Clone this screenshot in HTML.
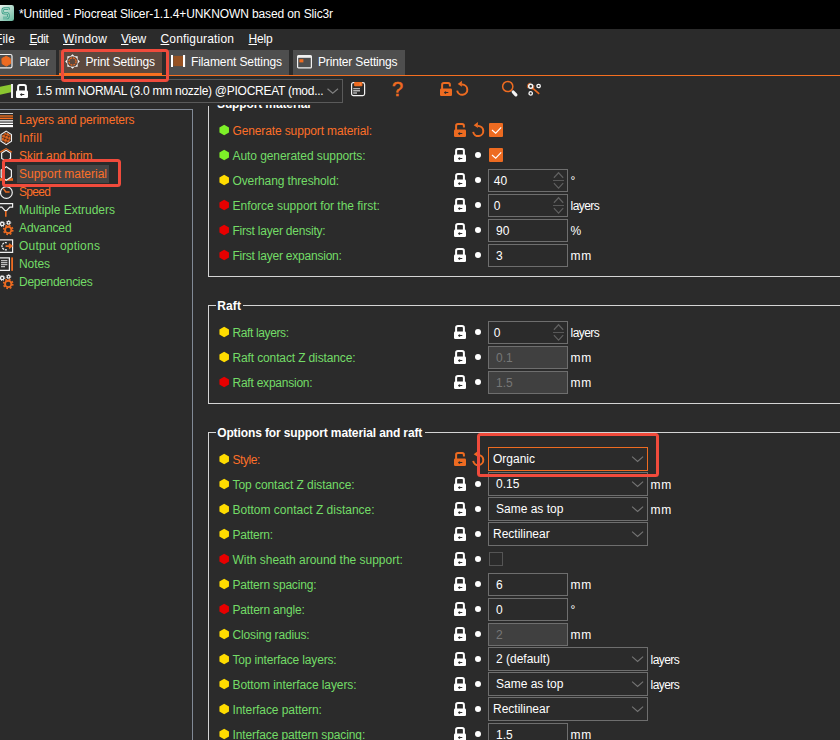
<!DOCTYPE html>
<html><head><meta charset="utf-8"><title>Piocreat Slicer</title>
<style>html,body{margin:0;padding:0}body{width:840px;height:740px;overflow:hidden;position:relative;background:#2b2b2b;font-family:"Liberation Sans", sans-serif;font-size:12px;color:#fff}u{text-decoration:underline;text-underline-offset:1px}</style></head>
<body>
<div style="position:absolute;left:194px;top:105px;width:646px;height:20px;overflow:hidden">
<span id="t0" style="position:absolute;left:23px;top:-11px;height:20px;line-height:20px;white-space:nowrap;color:#ffffff;font-size:12px;font-weight:bold;letter-spacing:-0.120px;">Support material</span>
</div>
<div style="position:absolute;left:0px;top:0px;width:840px;height:29px;background:#000"></div>
<svg style="position:absolute;left:-2px;top:5px" width="16" height="16" viewBox="0 0 16 16"><defs><linearGradient id="ig" x1="0" y1="0" x2="0.9" y2="1"><stop offset="0" stop-color="#f2f5f3"/><stop offset="0.45" stop-color="#b9dccf"/><stop offset="1" stop-color="#6dbba3"/></linearGradient></defs><rect x="0" y="0" width="16" height="16" rx="2.2" fill="url(#ig)"/><path d="M10.6 4.8 V3.6 H6.2 A1.4 1.4 0 0 0 4.8 5 V7 A1.4 1.4 0 0 0 6.2 8.2 H9 A1.6 1.6 0 0 1 10.4 9.8 V11.4 A1.6 1.6 0 0 1 8.8 13 H5" fill="none" stroke="#3a9e86" stroke-width="2.6" stroke-linejoin="round"/><path d="M10.6 4.8 V3.6 H6.2 A1.4 1.4 0 0 0 4.8 5 V7 A1.4 1.4 0 0 0 6.2 8.2 H9 A1.6 1.6 0 0 1 10.4 9.8 V11.4 A1.6 1.6 0 0 1 8.8 13 H5" fill="none" stroke="#a9d6c7" stroke-width="1" stroke-linejoin="round"/></svg>
<span id="t1" style="position:absolute;left:19px;top:4px;height:20px;line-height:20px;white-space:nowrap;color:#ffffff;font-size:12px;letter-spacing:-0.114px;">*Untitled - Piocreat Slicer-1.1.4+UNKNOWN based on Slic3r</span>
<span id="t2" style="position:absolute;left:-5px;top:29px;height:20px;line-height:20px;white-space:nowrap;color:#ffffff;font-size:12px;letter-spacing:0.183px;"><u>F</u>ile</span>
<span id="t3" style="position:absolute;left:29.4px;top:29px;height:20px;line-height:20px;white-space:nowrap;color:#ffffff;font-size:12px;letter-spacing:-0.429px;"><u>E</u>dit</span>
<span id="t4" style="position:absolute;left:63px;top:29px;height:20px;line-height:20px;white-space:nowrap;color:#ffffff;font-size:12px;letter-spacing:0.239px;"><u>W</u>indow</span>
<span id="t5" style="position:absolute;left:121px;top:29px;height:20px;line-height:20px;white-space:nowrap;color:#ffffff;font-size:12px;letter-spacing:-0.232px;"><u>V</u>iew</span>
<span id="t6" style="position:absolute;left:160.5px;top:29px;height:20px;line-height:20px;white-space:nowrap;color:#ffffff;font-size:12px;letter-spacing:0.169px;"><u>C</u>onfiguration</span>
<span id="t7" style="position:absolute;left:248.5px;top:29px;height:20px;line-height:20px;white-space:nowrap;color:#ffffff;font-size:12px;letter-spacing:-0.196px;"><u>H</u>elp</span>
<div style="position:absolute;left:0px;top:50px;width:56px;height:25px;background:#4e4e4e"></div>
<div style="position:absolute;left:59px;top:50px;width:103px;height:25px;background:#5c483e"></div>
<div style="position:absolute;left:59px;top:73px;width:103px;height:3px;background:#f97020"></div>
<div style="position:absolute;left:168px;top:50px;width:121px;height:25px;background:#4e4e4e"></div>
<div style="position:absolute;left:293px;top:50px;width:111.5px;height:25px;background:#4e4e4e"></div>
<div style="position:absolute;left:0px;top:74.6px;width:840px;height:1.5px;background:#f56f20"></div>
<span id="t8" style="position:absolute;left:19.5px;top:52px;height:20px;line-height:20px;white-space:nowrap;color:#ffffff;font-size:12px;letter-spacing:-0.338px;">Plater</span>
<span id="t9" style="position:absolute;left:85.5px;top:52px;height:20px;line-height:20px;white-space:nowrap;color:#ffffff;font-size:12px;letter-spacing:-0.139px;">Print Settings</span>
<span id="t10" style="position:absolute;left:191px;top:52px;height:20px;line-height:20px;white-space:nowrap;color:#ffffff;font-size:12px;letter-spacing:-0.104px;">Filament Settings</span>
<span id="t11" style="position:absolute;left:318px;top:52px;height:20px;line-height:20px;white-space:nowrap;color:#ffffff;font-size:12px;letter-spacing:-0.164px;">Printer Settings</span>
<svg style="position:absolute;left:-3px;top:54px;overflow:visible" width="16" height="15" viewBox="0 0 16 15"><rect x="0.5" y="0.5" width="14.5" height="13.4" rx="1.6" fill="none" stroke="#f0f0f0" stroke-width="1.2"/><polygon points="9.3,2.3 13.2,4.4 13.6,9.6 9.3,12.1 5.2,9.8 4.9,4.5" fill="#ed6b21" stroke="#ed6b21" stroke-width="1" stroke-linejoin="round"/></svg>
<svg style="position:absolute;left:64.5px;top:53.5px;overflow:visible" width="15" height="15" viewBox="0 0 15 15"><polygon points="7.50,0.20 9.64,2.33 12.66,2.34 12.67,5.36 14.80,7.50 12.67,9.64 12.66,12.66 9.64,12.67 7.50,14.80 5.36,12.67 2.34,12.66 2.33,9.64 0.20,7.50 2.33,5.36 2.34,2.34 5.36,2.33" fill="#f4f4f4"/><circle cx="7.5" cy="7.5" r="5.3" fill="#5c483e"/><circle cx="7.5" cy="7.5" r="3.6" fill="none" stroke="#ed6b21" stroke-width="1.2" stroke-dasharray="1.9 0.93"/></svg>
<svg style="position:absolute;left:171px;top:55px;overflow:visible" width="14" height="12" viewBox="0 0 14 12"><rect x="0" y="0" width="2" height="12" fill="#ffffff"/><rect x="12" y="0" width="2.1" height="12" fill="#ffffff"/><rect x="2.3" y="0.9" width="9.7" height="10.2" fill="#965223"/></svg>
<svg style="position:absolute;left:297px;top:55px;overflow:visible" width="15" height="14" viewBox="0 0 15 14"><rect x="0.6" y="0.6" width="13.8" height="12.3" rx="1" fill="none" stroke="#f0f0f0" stroke-width="1.2"/><rect x="0.6" y="0.6" width="13.8" height="2.2" fill="#f0f0f0"/><rect x="2.4" y="4.2" width="4" height="3.2" fill="#ed6b21"/></svg>
<div style="position:absolute;left:-1px;top:79px;width:344px;height:24px;box-sizing:border-box;border:1px solid #5a5a5a;background:#2b2b2b"></div>
<svg style="position:absolute;left:0px;top:84px;overflow:visible" width="12" height="13" viewBox="0 0 12 13"><polygon points="-1,2.9 11,0.6 11,8.2 -1,11" fill="#8bc630"/></svg>
<div style="position:absolute;left:11px;top:84px;width:1.6px;height:14px;background:#e8e8e8"></div>
<svg style="position:absolute;left:16px;top:83.5px;overflow:visible" width="12" height="14" viewBox="0 0 12 14"><path d="M2.1 7 V2.9 A1.8 1.8 0 0 1 3.9 1.1 H8.1 A1.8 1.8 0 0 1 9.9 2.9 V7" fill="none" stroke="#fff" stroke-width="2"/><rect x="0" y="6.5" width="12" height="7.5" rx="1.2" fill="#fff"/><path d="M3.9 10.6 L5.3 9.2 L6.6 10.1 H8.3 V11.1 H6.6 L5.3 12 Z" fill="#2b2b2b"/></svg>
<span id="t12" style="position:absolute;left:36px;top:81px;height:20px;line-height:20px;white-space:nowrap;color:#ffffff;font-size:12px;letter-spacing:-0.269px;">1.5 mm NORMAL (3.0 mm nozzle) @PIOCREAT (mod...</span>
<svg style="position:absolute;left:0;top:0;overflow:visible" width="1" height="1"><path d="M327.5 88.7 L332.75 93.3 L338 88.7" fill="none" stroke="#808080" stroke-width="1.2"/></svg>
<svg style="position:absolute;left:351px;top:82px;overflow:visible" width="14" height="14" viewBox="0 0 14 14"><rect x="0.6" y="0.6" width="13" height="13" rx="1.8" fill="none" stroke="#f2f2f2" stroke-width="1.2"/><rect x="3.1" y="0" width="8.3" height="4.3" rx="0.8" fill="#ed6b21"/><rect x="8.6" y="0.9" width="1.5" height="2.2" fill="#f98a45"/><path d="M2.2 6.6 H9 M2.2 8.8 H9 M2.2 11 H6" stroke="#b4b4b4" stroke-width="1.4"/></svg>
<span id="t13" style="position:absolute;left:392px;top:78.7px;height:20px;line-height:20px;white-space:nowrap;color:#ed6b21;font-size:20px;letter-spacing:-1.125px;-webkit-text-stroke:0.5px #ed6b21;">?</span>
<svg style="position:absolute;left:440px;top:82px;overflow:visible" width="12" height="14" viewBox="0 0 12 14"><path d="M2.1 7 V2.9 A1.8 1.8 0 0 1 3.9 1.1 H8.1 A1.8 1.8 0 0 1 9.9 2.9 V4.6" fill="none" stroke="#ed6b21" stroke-width="2"/><rect x="0" y="6.5" width="12" height="7.5" rx="1.2" fill="#ed6b21"/><path d="M3.9 10.6 L5.3 9.2 L6.6 10.1 H8.3 V11.1 H6.6 L5.3 12 Z" fill="#2b2b2b"/></svg>
<svg style="position:absolute;left:0;top:0;overflow:visible" width="1" height="1"><path d="M462.02 84.60 A5.10 5.10 0 1 1 457.18 90.59" fill="none" stroke="#ed6b21" stroke-width="2"/><path d="M457.70 84.00 L461.90 80.70 L461.90 86.80 Z" fill="#ed6b21"/></svg>
<svg style="position:absolute;left:501px;top:80px;overflow:visible" width="18" height="18" viewBox="0 0 18 18"><circle cx="6.75" cy="6.5" r="5.1" fill="none" stroke="#ed6b21" stroke-width="1.5"/><path d="M12.2 12 L14.9 14.8" stroke="#f4f4f4" stroke-width="3.2" stroke-linecap="round"/></svg>
<svg style="position:absolute;left:526px;top:81px;overflow:visible" width="16" height="16" viewBox="0 0 16 16"><path d="M5.2 5.8 L13.2 12.9" stroke="#ed6b21" stroke-width="1.6"/><circle cx="4.7" cy="5.3" r="3.3" fill="none" stroke="#ed6b21" stroke-width="0.9" stroke-dasharray="7 4" stroke-dashoffset="-8"/><circle cx="4.7" cy="5.3" r="2" fill="#2b2b2b" stroke="#f8f8f8" stroke-width="1.5"/><circle cx="12.6" cy="5" r="1.7" fill="none" stroke="#f8f8f8" stroke-width="1.3"/><circle cx="4.7" cy="12.4" r="1.7" fill="none" stroke="#f8f8f8" stroke-width="1.3"/></svg>
<div style="position:absolute;left:-1px;top:109px;width:194px;height:640px;box-sizing:border-box;border:1px solid #828a96;background:#2b2b2b"></div>
<div style="position:absolute;left:17px;top:165px;width:92px;height:18px;background:#444444"></div>
<span id="t14" style="position:absolute;left:19px;top:110px;height:20px;line-height:20px;white-space:nowrap;color:#fd6f28;font-size:12px;letter-spacing:-0.190px;">Layers and perimeters</span>
<span id="t15" style="position:absolute;left:19px;top:128px;height:20px;line-height:20px;white-space:nowrap;color:#fd6f28;font-size:12px;letter-spacing:0.301px;">Infill</span>
<span id="t16" style="position:absolute;left:19px;top:146px;height:20px;line-height:20px;white-space:nowrap;color:#fd6f28;font-size:12px;letter-spacing:-0.039px;">Skirt and brim</span>
<span id="t17" style="position:absolute;left:19px;top:164px;height:20px;line-height:20px;white-space:nowrap;color:#fd6f28;font-size:12px;letter-spacing:-0.003px;">Support material</span>
<span id="t18" style="position:absolute;left:19px;top:182px;height:20px;line-height:20px;white-space:nowrap;color:#fd6f28;font-size:12px;letter-spacing:-0.712px;">Speed</span>
<span id="t19" style="position:absolute;left:19px;top:200px;height:20px;line-height:20px;white-space:nowrap;color:#73dc67;font-size:12px;letter-spacing:-0.003px;">Multiple Extruders</span>
<span id="t20" style="position:absolute;left:19px;top:218px;height:20px;line-height:20px;white-space:nowrap;color:#73dc67;font-size:12px;letter-spacing:-0.117px;">Advanced</span>
<span id="t21" style="position:absolute;left:19px;top:236px;height:20px;line-height:20px;white-space:nowrap;color:#73dc67;font-size:12px;letter-spacing:0.218px;">Output options</span>
<span id="t22" style="position:absolute;left:19px;top:254px;height:20px;line-height:20px;white-space:nowrap;color:#73dc67;font-size:12px;letter-spacing:-0.080px;">Notes</span>
<span id="t23" style="position:absolute;left:19px;top:272px;height:20px;line-height:20px;white-space:nowrap;color:#73dc67;font-size:12px;letter-spacing:-0.281px;">Dependencies</span>
<svg style="position:absolute;left:0;top:0;overflow:visible" width="16" height="740" viewBox="0 0 16 740"><rect x="0" y="113" width="13" height="1" fill="#c8c8c8"/><rect x="0" y="115" width="13" height="2" fill="#b35a1f"/><rect x="0" y="117.6" width="13" height="1.5" fill="#f97020"/><rect x="0" y="120" width="13" height="1.5" fill="#d0d0d0"/><rect x="0" y="121.5" width="13" height="1.2" fill="#9a9a9a"/><rect x="0" y="123" width="13" height="1.1" fill="#ffffff"/><rect x="0" y="125" width="13" height="2.2" fill="#ffffff"/><defs><pattern id="xh" width="3.2" height="3.2" patternUnits="userSpaceOnUse" patternTransform="rotate(20)"><rect width="3.2" height="3.2" fill="#e0651f"/><path d="M0 0 H3.2 M0 0 V3.2" stroke="#3a2418" stroke-width="1"/></pattern></defs><polygon points="6.20,132.30 10.56,135.10 10.56,140.70 6.20,143.50 1.84,140.70 1.84,135.10" fill="url(#xh)"/><polygon points="6.20,131.10 11.50,134.50 11.50,141.30 6.20,144.70 0.90,141.30 0.90,134.50" fill="none" stroke="#f0f0f0" stroke-width="1.1"/><polygon points="6.10,150.30 10.54,153.00 10.54,158.40 6.10,161.10 1.66,158.40 1.66,153.00" fill="none" stroke="#f0f0f0" stroke-width="1.2"/><path d="M0.2 152.2 L6.1 148.6 L12 152.2" fill="none" stroke="#ed6b21" stroke-width="1.2"/><rect x="-1" y="178.2" width="14" height="2.6" fill="#ed6b21"/><polygon points="6.30,166.80 11.41,170.15 11.41,176.85 6.30,180.20 1.19,176.85 1.19,170.15" fill="#2b2b2b" stroke="#f0f0f0" stroke-width="1.2"/><circle cx="6.4" cy="192.5" r="5.9" fill="none" stroke="#f0f0f0" stroke-width="1.2"/><path d="M3.4 188.6 L5.8 192 H9.6" fill="none" stroke="#ed6b21" stroke-width="1.4"/><path d="M-1 203.6 H12.6 V207.2 H9.8 L6.6 210.6 H5 L1.8 207.2 H-1" fill="none" stroke="#f0f0f0" stroke-width="1.2"/><path d="M5.8 211 V216.8" stroke="#ed6b21" stroke-width="1.6"/><circle cx="2.2" cy="224" r="1.7" fill="none" stroke="#f0f0f0" stroke-width="1.3"/><circle cx="2.2" cy="224" r="2.6" fill="none" stroke="#f0f0f0" stroke-width="0.9" stroke-dasharray="1 1.05"/><circle cx="8.6" cy="222.7" r="1.4" fill="none" stroke="#f0f0f0" stroke-width="1.2"/><circle cx="8.6" cy="222.7" r="2.2" fill="none" stroke="#f0f0f0" stroke-width="0.8" stroke-dasharray="0.9 0.83"/><circle cx="8.2" cy="229.9" r="3.2" fill="none" stroke="#ed6b21" stroke-width="1.9"/><circle cx="8.2" cy="229.9" r="4.6" fill="none" stroke="#ed6b21" stroke-width="1.5" stroke-dasharray="1.8 1.81"/><circle cx="2.2" cy="278" r="1.7" fill="none" stroke="#f0f0f0" stroke-width="1.3"/><circle cx="2.2" cy="278" r="2.6" fill="none" stroke="#f0f0f0" stroke-width="0.9" stroke-dasharray="1 1.05"/><circle cx="8.6" cy="276.7" r="1.4" fill="none" stroke="#f0f0f0" stroke-width="1.2"/><circle cx="8.6" cy="276.7" r="2.2" fill="none" stroke="#f0f0f0" stroke-width="0.8" stroke-dasharray="0.9 0.83"/><circle cx="8.2" cy="283.9" r="3.2" fill="none" stroke="#ed6b21" stroke-width="1.9"/><circle cx="8.2" cy="283.9" r="4.6" fill="none" stroke="#ed6b21" stroke-width="1.5" stroke-dasharray="1.8 1.81"/><path d="M-1 239.9 H12.6 V252.4 H-1" fill="none" stroke="#f0f0f0" stroke-width="1.2"/><path d="M6.8 242.8 A3.6 3.6 0 1 0 6.8 249.6" fill="none" stroke="#f0f0f0" stroke-width="1.3" stroke-dasharray="2 0.8"/><path d="M5.6 246.1 H11 M9 243.8 L11.8 246.1 L9 248.4" fill="none" stroke="#ed6b21" stroke-width="1.6"/><path d="M-1 257.9 H9.4 V270.4 H-1" fill="none" stroke="#f0f0f0" stroke-width="1.2"/><path d="M1 260.6 H7.4 M1 262.6 H7.4 M1 264.6 H7.4 M1 266.6 H5" stroke="#bdbdbd" stroke-width="1.4"/><rect x="11.2" y="257.4" width="1.8" height="13.4" fill="#ed6b21"/></svg>
<div style="position:absolute;left:208px;top:105.7px;width:700px;height:171.3px;box-sizing:border-box;border:1px solid #d4d4d4;border-right:none;border-top:none"></div>
<div style="position:absolute;left:208px;top:305px;width:700px;height:99px;box-sizing:border-box;border:1px solid #d4d4d4;border-right:none"></div>
<div style="position:absolute;left:215.5px;top:300px;width:27.5px;height:12px;background:#2b2b2b"></div>
<span id="t24" style="position:absolute;left:217.3px;top:296px;height:20px;line-height:20px;white-space:nowrap;color:#ffffff;font-size:12px;font-weight:bold;letter-spacing:0.102px;">Raft</span>
<div style="position:absolute;left:208px;top:432px;width:700px;height:400px;box-sizing:border-box;border:1px solid #d4d4d4;border-right:none"></div>
<div style="position:absolute;left:215.5px;top:426px;width:209px;height:12px;background:#2b2b2b"></div>
<span id="t25" style="position:absolute;left:217.2px;top:423px;height:20px;line-height:20px;white-space:nowrap;color:#ffffff;font-size:12px;font-weight:bold;letter-spacing:-0.117px;">Options for support material and raft</span>
<svg style="position:absolute;left:0;top:0;overflow:visible" width="1" height="1"><polygon points="224.20,124.85 228.97,127.42 228.97,132.57 224.20,135.15 219.43,132.57 219.43,127.42" fill="#7df028"/></svg>
<span id="t26" style="position:absolute;left:232.5px;top:121px;height:20px;line-height:20px;white-space:nowrap;color:#fd6f28;font-size:12px;letter-spacing:-0.127px;">Generate support material:</span>
<svg style="position:absolute;left:454px;top:123px;overflow:visible" width="12" height="14" viewBox="0 0 12 14"><path d="M2.1 7 V2.9 A1.8 1.8 0 0 1 3.9 1.1 H8.1 A1.8 1.8 0 0 1 9.9 2.9 V4.6" fill="none" stroke="#ed6b21" stroke-width="2"/><rect x="0" y="6.5" width="12" height="7.5" rx="1.2" fill="#ed6b21"/><path d="M3.9 10.6 L5.3 9.2 L6.6 10.1 H8.3 V11.1 H6.6 L5.3 12 Z" fill="#2b2b2b"/></svg>
<svg style="position:absolute;left:0;top:0;overflow:visible" width="1" height="1"><path d="M478.02 125.90 A5.10 5.10 0 1 1 473.18 131.89" fill="none" stroke="#ed6b21" stroke-width="2"/><path d="M473.70 125.30 L477.90 122.00 L477.90 128.10 Z" fill="#ed6b21"/></svg>
<div style="position:absolute;left:489px;top:123px;width:14px;height:14px;background:#ed6b21;border-radius:1px"></div>
<svg style="position:absolute;left:489px;top:123px;overflow:visible" width="14" height="14" viewBox="0 0 14 14"><path d="M3 7 L6.7 10.2 L12.2 4.4" fill="none" stroke="#fff" stroke-width="1.15"/></svg>
<svg style="position:absolute;left:0;top:0;overflow:visible" width="1" height="1"><polygon points="224.20,149.85 228.97,152.43 228.97,157.57 224.20,160.15 219.43,157.57 219.43,152.43" fill="#7df028"/></svg>
<span id="t27" style="position:absolute;left:232.5px;top:146px;height:20px;line-height:20px;white-space:nowrap;color:#73dc67;font-size:12px;letter-spacing:-0.075px;">Auto generated supports:</span>
<svg style="position:absolute;left:454px;top:148px;overflow:visible" width="12" height="14" viewBox="0 0 12 14"><path d="M2.1 7 V2.9 A1.8 1.8 0 0 1 3.9 1.1 H8.1 A1.8 1.8 0 0 1 9.9 2.9 V7" fill="none" stroke="#fff" stroke-width="2"/><rect x="0" y="6.5" width="12" height="7.5" rx="1.2" fill="#fff"/><path d="M3.9 10.6 L5.3 9.2 L6.6 10.1 H8.3 V11.1 H6.6 L5.3 12 Z" fill="#2b2b2b"/></svg>
<div style="position:absolute;left:475px;top:152px;width:6px;height:6px;border-radius:50%;background:#fff"></div>
<div style="position:absolute;left:489px;top:148px;width:14px;height:14px;background:#ed6b21;border-radius:1px"></div>
<svg style="position:absolute;left:489px;top:148px;overflow:visible" width="14" height="14" viewBox="0 0 14 14"><path d="M3 7 L6.7 10.2 L12.2 4.4" fill="none" stroke="#fff" stroke-width="1.15"/></svg>
<svg style="position:absolute;left:0;top:0;overflow:visible" width="1" height="1"><polygon points="224.20,174.85 228.97,177.43 228.97,182.57 224.20,185.15 219.43,182.57 219.43,177.43" fill="#ffdc00"/></svg>
<span id="t28" style="position:absolute;left:232.5px;top:171px;height:20px;line-height:20px;white-space:nowrap;color:#73dc67;font-size:12px;letter-spacing:-0.121px;">Overhang threshold:</span>
<svg style="position:absolute;left:454px;top:173px;overflow:visible" width="12" height="14" viewBox="0 0 12 14"><path d="M2.1 7 V2.9 A1.8 1.8 0 0 1 3.9 1.1 H8.1 A1.8 1.8 0 0 1 9.9 2.9 V7" fill="none" stroke="#fff" stroke-width="2"/><rect x="0" y="6.5" width="12" height="7.5" rx="1.2" fill="#fff"/><path d="M3.9 10.6 L5.3 9.2 L6.6 10.1 H8.3 V11.1 H6.6 L5.3 12 Z" fill="#2b2b2b"/></svg>
<div style="position:absolute;left:475px;top:177px;width:6px;height:6px;border-radius:50%;background:#fff"></div>
<div style="position:absolute;left:488px;top:169px;width:80px;height:23px;box-sizing:border-box;border:1px solid #6e6e6e;background:#2b2b2b"></div>
<span id="t29" style="position:absolute;left:493.8px;top:171px;height:20px;line-height:20px;white-space:nowrap;color:#ffffff;font-size:12px;">40</span>
<svg style="position:absolute;left:0;top:0;overflow:visible" width="1" height="1"><path d="M553.9 177.75 L558.55 172.75 L563.2 177.75" fill="none" stroke="#606060" stroke-width="1.2"/></svg>
<svg style="position:absolute;left:0;top:0;overflow:visible" width="1" height="1"><path d="M553.9 183.2 L558.55 188.2 L563.2 183.2" fill="none" stroke="#606060" stroke-width="1.2"/></svg>
<div style="position:absolute;left:553px;top:180px;width:11px;height:1px;background:#585858"></div>
<span id="t30" style="position:absolute;left:570.6px;top:171px;height:20px;line-height:20px;white-space:nowrap;color:#ffffff;font-size:12px;letter-spacing:-0.812px;">°</span>
<svg style="position:absolute;left:0;top:0;overflow:visible" width="1" height="1"><polygon points="224.20,199.85 228.97,202.43 228.97,207.57 224.20,210.15 219.43,207.57 219.43,202.43" fill="#e70000"/></svg>
<span id="t31" style="position:absolute;left:232.5px;top:196px;height:20px;line-height:20px;white-space:nowrap;color:#73dc67;font-size:12px;letter-spacing:-0.026px;">Enforce support for the first:</span>
<svg style="position:absolute;left:454px;top:198px;overflow:visible" width="12" height="14" viewBox="0 0 12 14"><path d="M2.1 7 V2.9 A1.8 1.8 0 0 1 3.9 1.1 H8.1 A1.8 1.8 0 0 1 9.9 2.9 V7" fill="none" stroke="#fff" stroke-width="2"/><rect x="0" y="6.5" width="12" height="7.5" rx="1.2" fill="#fff"/><path d="M3.9 10.6 L5.3 9.2 L6.6 10.1 H8.3 V11.1 H6.6 L5.3 12 Z" fill="#2b2b2b"/></svg>
<div style="position:absolute;left:475px;top:202px;width:6px;height:6px;border-radius:50%;background:#fff"></div>
<div style="position:absolute;left:488px;top:194px;width:80px;height:23px;box-sizing:border-box;border:1px solid #6e6e6e;background:#2b2b2b"></div>
<span id="t32" style="position:absolute;left:493.8px;top:196px;height:20px;line-height:20px;white-space:nowrap;color:#ffffff;font-size:12px;">0</span>
<svg style="position:absolute;left:0;top:0;overflow:visible" width="1" height="1"><path d="M553.9 202.75 L558.55 197.75 L563.2 202.75" fill="none" stroke="#606060" stroke-width="1.2"/></svg>
<svg style="position:absolute;left:0;top:0;overflow:visible" width="1" height="1"><path d="M553.9 208.2 L558.55 213.2 L563.2 208.2" fill="none" stroke="#606060" stroke-width="1.2"/></svg>
<div style="position:absolute;left:553px;top:205px;width:11px;height:1px;background:#585858"></div>
<span id="t33" style="position:absolute;left:570.6px;top:196px;height:20px;line-height:20px;white-space:nowrap;color:#ffffff;font-size:12px;letter-spacing:-0.585px;">layers</span>
<svg style="position:absolute;left:0;top:0;overflow:visible" width="1" height="1"><polygon points="224.20,224.85 228.97,227.43 228.97,232.57 224.20,235.15 219.43,232.57 219.43,227.43" fill="#e70000"/></svg>
<span id="t34" style="position:absolute;left:232.5px;top:221px;height:20px;line-height:20px;white-space:nowrap;color:#73dc67;font-size:12px;letter-spacing:-0.224px;">First layer density:</span>
<svg style="position:absolute;left:454px;top:223px;overflow:visible" width="12" height="14" viewBox="0 0 12 14"><path d="M2.1 7 V2.9 A1.8 1.8 0 0 1 3.9 1.1 H8.1 A1.8 1.8 0 0 1 9.9 2.9 V7" fill="none" stroke="#fff" stroke-width="2"/><rect x="0" y="6.5" width="12" height="7.5" rx="1.2" fill="#fff"/><path d="M3.9 10.6 L5.3 9.2 L6.6 10.1 H8.3 V11.1 H6.6 L5.3 12 Z" fill="#2b2b2b"/></svg>
<div style="position:absolute;left:475px;top:227px;width:6px;height:6px;border-radius:50%;background:#fff"></div>
<div style="position:absolute;left:488px;top:219px;width:80px;height:23px;box-sizing:border-box;border:1px solid #6e6e6e;background:#2b2b2b"></div>
<span id="t35" style="position:absolute;left:496px;top:221px;height:20px;line-height:20px;white-space:nowrap;color:#ffffff;font-size:12px;">90</span>
<span id="t36" style="position:absolute;left:570.6px;top:221px;height:20px;line-height:20px;white-space:nowrap;color:#ffffff;font-size:12px;letter-spacing:-1.072px;">%</span>
<svg style="position:absolute;left:0;top:0;overflow:visible" width="1" height="1"><polygon points="224.20,249.85 228.97,252.43 228.97,257.57 224.20,260.15 219.43,257.57 219.43,252.43" fill="#e70000"/></svg>
<span id="t37" style="position:absolute;left:232.5px;top:246px;height:20px;line-height:20px;white-space:nowrap;color:#73dc67;font-size:12px;letter-spacing:-0.221px;">First layer expansion:</span>
<svg style="position:absolute;left:454px;top:248px;overflow:visible" width="12" height="14" viewBox="0 0 12 14"><path d="M2.1 7 V2.9 A1.8 1.8 0 0 1 3.9 1.1 H8.1 A1.8 1.8 0 0 1 9.9 2.9 V7" fill="none" stroke="#fff" stroke-width="2"/><rect x="0" y="6.5" width="12" height="7.5" rx="1.2" fill="#fff"/><path d="M3.9 10.6 L5.3 9.2 L6.6 10.1 H8.3 V11.1 H6.6 L5.3 12 Z" fill="#2b2b2b"/></svg>
<div style="position:absolute;left:475px;top:252px;width:6px;height:6px;border-radius:50%;background:#fff"></div>
<div style="position:absolute;left:488px;top:244px;width:80px;height:23px;box-sizing:border-box;border:1px solid #6e6e6e;background:#2b2b2b"></div>
<span id="t38" style="position:absolute;left:496px;top:246px;height:20px;line-height:20px;white-space:nowrap;color:#ffffff;font-size:12px;">3</span>
<span id="t39" style="position:absolute;left:570.6px;top:246px;height:20px;line-height:20px;white-space:nowrap;color:#ffffff;font-size:12px;letter-spacing:0.667px;">mm</span>
<svg style="position:absolute;left:0;top:0;overflow:visible" width="1" height="1"><polygon points="224.20,326.85 228.97,329.43 228.97,334.57 224.20,337.15 219.43,334.57 219.43,329.43" fill="#ffdc00"/></svg>
<span id="t40" style="position:absolute;left:232.5px;top:323px;height:20px;line-height:20px;white-space:nowrap;color:#73dc67;font-size:12px;letter-spacing:-0.382px;">Raft layers:</span>
<svg style="position:absolute;left:454px;top:325px;overflow:visible" width="12" height="14" viewBox="0 0 12 14"><path d="M2.1 7 V2.9 A1.8 1.8 0 0 1 3.9 1.1 H8.1 A1.8 1.8 0 0 1 9.9 2.9 V7" fill="none" stroke="#fff" stroke-width="2"/><rect x="0" y="6.5" width="12" height="7.5" rx="1.2" fill="#fff"/><path d="M3.9 10.6 L5.3 9.2 L6.6 10.1 H8.3 V11.1 H6.6 L5.3 12 Z" fill="#2b2b2b"/></svg>
<div style="position:absolute;left:475px;top:329px;width:6px;height:6px;border-radius:50%;background:#fff"></div>
<div style="position:absolute;left:488px;top:321px;width:80px;height:23px;box-sizing:border-box;border:1px solid #6e6e6e;background:#2b2b2b"></div>
<span id="t41" style="position:absolute;left:493.8px;top:323px;height:20px;line-height:20px;white-space:nowrap;color:#ffffff;font-size:12px;">0</span>
<svg style="position:absolute;left:0;top:0;overflow:visible" width="1" height="1"><path d="M553.9 329.75 L558.55 324.75 L563.2 329.75" fill="none" stroke="#606060" stroke-width="1.2"/></svg>
<svg style="position:absolute;left:0;top:0;overflow:visible" width="1" height="1"><path d="M553.9 335.2 L558.55 340.2 L563.2 335.2" fill="none" stroke="#606060" stroke-width="1.2"/></svg>
<div style="position:absolute;left:553px;top:332px;width:11px;height:1px;background:#585858"></div>
<span id="t42" style="position:absolute;left:570.6px;top:323px;height:20px;line-height:20px;white-space:nowrap;color:#ffffff;font-size:12px;letter-spacing:-0.585px;">layers</span>
<svg style="position:absolute;left:0;top:0;overflow:visible" width="1" height="1"><polygon points="224.20,351.85 228.97,354.43 228.97,359.57 224.20,362.15 219.43,359.57 219.43,354.43" fill="#ffdc00"/></svg>
<span id="t43" style="position:absolute;left:232.5px;top:348px;height:20px;line-height:20px;white-space:nowrap;color:#73dc67;font-size:12px;letter-spacing:-0.130px;">Raft contact Z distance:</span>
<svg style="position:absolute;left:454px;top:350px;overflow:visible" width="12" height="14" viewBox="0 0 12 14"><path d="M2.1 7 V2.9 A1.8 1.8 0 0 1 3.9 1.1 H8.1 A1.8 1.8 0 0 1 9.9 2.9 V7" fill="none" stroke="#fff" stroke-width="2"/><rect x="0" y="6.5" width="12" height="7.5" rx="1.2" fill="#fff"/><path d="M3.9 10.6 L5.3 9.2 L6.6 10.1 H8.3 V11.1 H6.6 L5.3 12 Z" fill="#2b2b2b"/></svg>
<div style="position:absolute;left:475px;top:354px;width:6px;height:6px;border-radius:50%;background:#fff"></div>
<div style="position:absolute;left:488px;top:346px;width:80px;height:23px;box-sizing:border-box;border:1px solid #6e6e6e;background:#404040"></div>
<span id="t44" style="position:absolute;left:496px;top:348px;height:20px;line-height:20px;white-space:nowrap;color:#777777;font-size:12px;">0.1</span>
<span id="t45" style="position:absolute;left:570.6px;top:348px;height:20px;line-height:20px;white-space:nowrap;color:#ffffff;font-size:12px;letter-spacing:0.667px;">mm</span>
<svg style="position:absolute;left:0;top:0;overflow:visible" width="1" height="1"><polygon points="224.20,376.85 228.97,379.43 228.97,384.57 224.20,387.15 219.43,384.57 219.43,379.43" fill="#e70000"/></svg>
<span id="t46" style="position:absolute;left:232.5px;top:373px;height:20px;line-height:20px;white-space:nowrap;color:#73dc67;font-size:12px;letter-spacing:-0.234px;">Raft expansion:</span>
<svg style="position:absolute;left:454px;top:375px;overflow:visible" width="12" height="14" viewBox="0 0 12 14"><path d="M2.1 7 V2.9 A1.8 1.8 0 0 1 3.9 1.1 H8.1 A1.8 1.8 0 0 1 9.9 2.9 V7" fill="none" stroke="#fff" stroke-width="2"/><rect x="0" y="6.5" width="12" height="7.5" rx="1.2" fill="#fff"/><path d="M3.9 10.6 L5.3 9.2 L6.6 10.1 H8.3 V11.1 H6.6 L5.3 12 Z" fill="#2b2b2b"/></svg>
<div style="position:absolute;left:475px;top:379px;width:6px;height:6px;border-radius:50%;background:#fff"></div>
<div style="position:absolute;left:488px;top:371px;width:80px;height:23px;box-sizing:border-box;border:1px solid #6e6e6e;background:#404040"></div>
<span id="t47" style="position:absolute;left:496px;top:373px;height:20px;line-height:20px;white-space:nowrap;color:#777777;font-size:12px;">1.5</span>
<span id="t48" style="position:absolute;left:570.6px;top:373px;height:20px;line-height:20px;white-space:nowrap;color:#ffffff;font-size:12px;letter-spacing:0.667px;">mm</span>
<svg style="position:absolute;left:0;top:0;overflow:visible" width="1" height="1"><polygon points="224.20,453.85 228.97,456.43 228.97,461.57 224.20,464.15 219.43,461.57 219.43,456.43" fill="#ffdc00"/></svg>
<span id="t49" style="position:absolute;left:232.5px;top:450px;height:20px;line-height:20px;white-space:nowrap;color:#fd6f28;font-size:12px;letter-spacing:-0.457px;">Style:</span>
<svg style="position:absolute;left:454px;top:452px;overflow:visible" width="12" height="14" viewBox="0 0 12 14"><path d="M2.1 7 V2.9 A1.8 1.8 0 0 1 3.9 1.1 H8.1 A1.8 1.8 0 0 1 9.9 2.9 V4.6" fill="none" stroke="#ed6b21" stroke-width="2"/><rect x="0" y="6.5" width="12" height="7.5" rx="1.2" fill="#ed6b21"/><path d="M3.9 10.6 L5.3 9.2 L6.6 10.1 H8.3 V11.1 H6.6 L5.3 12 Z" fill="#2b2b2b"/></svg>
<svg style="position:absolute;left:0;top:0;overflow:visible" width="1" height="1"><path d="M478.02 454.90 A5.10 5.10 0 1 1 473.18 460.89" fill="none" stroke="#ed6b21" stroke-width="2"/><path d="M473.70 454.30 L477.90 451.00 L477.90 457.10 Z" fill="#ed6b21"/></svg>
<div style="position:absolute;left:488px;top:447px;width:160px;height:24px;box-sizing:border-box;border:1px solid #ed6b21;background:#2b2b2b"></div>
<span id="t50" style="position:absolute;left:493px;top:449px;height:20px;line-height:20px;white-space:nowrap;color:#ffffff;font-size:12px;">Organic</span>
<svg style="position:absolute;left:0;top:0;overflow:visible" width="1" height="1"><path d="M632.1 456.65 L637.6 461.45 L643.1 456.65" fill="none" stroke="#747474" stroke-width="1.2"/></svg>
<svg style="position:absolute;left:0;top:0;overflow:visible" width="1" height="1"><polygon points="224.20,478.85 228.97,481.43 228.97,486.57 224.20,489.15 219.43,486.57 219.43,481.43" fill="#ffdc00"/></svg>
<span id="t51" style="position:absolute;left:232.5px;top:475px;height:20px;line-height:20px;white-space:nowrap;color:#73dc67;font-size:12px;letter-spacing:-0.058px;">Top contact Z distance:</span>
<svg style="position:absolute;left:454px;top:477px;overflow:visible" width="12" height="14" viewBox="0 0 12 14"><path d="M2.1 7 V2.9 A1.8 1.8 0 0 1 3.9 1.1 H8.1 A1.8 1.8 0 0 1 9.9 2.9 V7" fill="none" stroke="#fff" stroke-width="2"/><rect x="0" y="6.5" width="12" height="7.5" rx="1.2" fill="#fff"/><path d="M3.9 10.6 L5.3 9.2 L6.6 10.1 H8.3 V11.1 H6.6 L5.3 12 Z" fill="#2b2b2b"/></svg>
<div style="position:absolute;left:475px;top:481px;width:6px;height:6px;border-radius:50%;background:#fff"></div>
<div style="position:absolute;left:488px;top:472px;width:160px;height:24px;box-sizing:border-box;border:1px solid #6e6e6e;background:#2b2b2b"></div>
<span id="t52" style="position:absolute;left:496px;top:474px;height:20px;line-height:20px;white-space:nowrap;color:#ffffff;font-size:12px;">0.15</span>
<svg style="position:absolute;left:0;top:0;overflow:visible" width="1" height="1"><path d="M632.1 481.65 L637.6 486.45 L643.1 481.65" fill="none" stroke="#747474" stroke-width="1.2"/></svg>
<span id="t53" style="position:absolute;left:650.6px;top:475px;height:20px;line-height:20px;white-space:nowrap;color:#ffffff;font-size:12px;letter-spacing:0.667px;">mm</span>
<svg style="position:absolute;left:0;top:0;overflow:visible" width="1" height="1"><polygon points="224.20,503.85 228.97,506.43 228.97,511.57 224.20,514.15 219.43,511.57 219.43,506.43" fill="#ffdc00"/></svg>
<span id="t54" style="position:absolute;left:232.5px;top:500px;height:20px;line-height:20px;white-space:nowrap;color:#73dc67;font-size:12px;letter-spacing:0.001px;">Bottom contact Z distance:</span>
<svg style="position:absolute;left:454px;top:502px;overflow:visible" width="12" height="14" viewBox="0 0 12 14"><path d="M2.1 7 V2.9 A1.8 1.8 0 0 1 3.9 1.1 H8.1 A1.8 1.8 0 0 1 9.9 2.9 V7" fill="none" stroke="#fff" stroke-width="2"/><rect x="0" y="6.5" width="12" height="7.5" rx="1.2" fill="#fff"/><path d="M3.9 10.6 L5.3 9.2 L6.6 10.1 H8.3 V11.1 H6.6 L5.3 12 Z" fill="#2b2b2b"/></svg>
<div style="position:absolute;left:475px;top:506px;width:6px;height:6px;border-radius:50%;background:#fff"></div>
<div style="position:absolute;left:488px;top:497px;width:160px;height:24px;box-sizing:border-box;border:1px solid #6e6e6e;background:#2b2b2b"></div>
<span id="t55" style="position:absolute;left:496px;top:499px;height:20px;line-height:20px;white-space:nowrap;color:#ffffff;font-size:12px;">Same as top</span>
<svg style="position:absolute;left:0;top:0;overflow:visible" width="1" height="1"><path d="M632.1 506.65 L637.6 511.45 L643.1 506.65" fill="none" stroke="#747474" stroke-width="1.2"/></svg>
<span id="t56" style="position:absolute;left:650.6px;top:500px;height:20px;line-height:20px;white-space:nowrap;color:#ffffff;font-size:12px;letter-spacing:0.667px;">mm</span>
<svg style="position:absolute;left:0;top:0;overflow:visible" width="1" height="1"><polygon points="224.20,528.85 228.97,531.42 228.97,536.58 224.20,539.15 219.43,536.58 219.43,531.42" fill="#ffdc00"/></svg>
<span id="t57" style="position:absolute;left:232.5px;top:525px;height:20px;line-height:20px;white-space:nowrap;color:#73dc67;font-size:12px;letter-spacing:-0.204px;">Pattern:</span>
<svg style="position:absolute;left:454px;top:527px;overflow:visible" width="12" height="14" viewBox="0 0 12 14"><path d="M2.1 7 V2.9 A1.8 1.8 0 0 1 3.9 1.1 H8.1 A1.8 1.8 0 0 1 9.9 2.9 V7" fill="none" stroke="#fff" stroke-width="2"/><rect x="0" y="6.5" width="12" height="7.5" rx="1.2" fill="#fff"/><path d="M3.9 10.6 L5.3 9.2 L6.6 10.1 H8.3 V11.1 H6.6 L5.3 12 Z" fill="#2b2b2b"/></svg>
<div style="position:absolute;left:475px;top:531px;width:6px;height:6px;border-radius:50%;background:#fff"></div>
<div style="position:absolute;left:488px;top:522px;width:160px;height:24px;box-sizing:border-box;border:1px solid #6e6e6e;background:#2b2b2b"></div>
<span id="t58" style="position:absolute;left:493px;top:524px;height:20px;line-height:20px;white-space:nowrap;color:#ffffff;font-size:12px;">Rectilinear</span>
<svg style="position:absolute;left:0;top:0;overflow:visible" width="1" height="1"><path d="M632.1 531.65 L637.6 536.45 L643.1 531.65" fill="none" stroke="#747474" stroke-width="1.2"/></svg>
<svg style="position:absolute;left:0;top:0;overflow:visible" width="1" height="1"><polygon points="224.20,553.85 228.97,556.42 228.97,561.58 224.20,564.15 219.43,561.58 219.43,556.42" fill="#e70000"/></svg>
<span id="t59" style="position:absolute;left:232.5px;top:550px;height:20px;line-height:20px;white-space:nowrap;color:#73dc67;font-size:12px;letter-spacing:-0.016px;">With sheath around the support:</span>
<svg style="position:absolute;left:454px;top:552px;overflow:visible" width="12" height="14" viewBox="0 0 12 14"><path d="M2.1 7 V2.9 A1.8 1.8 0 0 1 3.9 1.1 H8.1 A1.8 1.8 0 0 1 9.9 2.9 V7" fill="none" stroke="#fff" stroke-width="2"/><rect x="0" y="6.5" width="12" height="7.5" rx="1.2" fill="#fff"/><path d="M3.9 10.6 L5.3 9.2 L6.6 10.1 H8.3 V11.1 H6.6 L5.3 12 Z" fill="#2b2b2b"/></svg>
<div style="position:absolute;left:475px;top:556px;width:6px;height:6px;border-radius:50%;background:#fff"></div>
<div style="position:absolute;left:489px;top:552px;width:14px;height:14px;box-sizing:border-box;border:1px solid #555;background:#2b2b2b"></div>
<svg style="position:absolute;left:0;top:0;overflow:visible" width="1" height="1"><polygon points="224.20,578.85 228.97,581.42 228.97,586.58 224.20,589.15 219.43,586.58 219.43,581.42" fill="#ffdc00"/></svg>
<span id="t60" style="position:absolute;left:232.5px;top:575px;height:20px;line-height:20px;white-space:nowrap;color:#73dc67;font-size:12px;letter-spacing:-0.182px;">Pattern spacing:</span>
<svg style="position:absolute;left:454px;top:577px;overflow:visible" width="12" height="14" viewBox="0 0 12 14"><path d="M2.1 7 V2.9 A1.8 1.8 0 0 1 3.9 1.1 H8.1 A1.8 1.8 0 0 1 9.9 2.9 V7" fill="none" stroke="#fff" stroke-width="2"/><rect x="0" y="6.5" width="12" height="7.5" rx="1.2" fill="#fff"/><path d="M3.9 10.6 L5.3 9.2 L6.6 10.1 H8.3 V11.1 H6.6 L5.3 12 Z" fill="#2b2b2b"/></svg>
<div style="position:absolute;left:475px;top:581px;width:6px;height:6px;border-radius:50%;background:#fff"></div>
<div style="position:absolute;left:488px;top:573px;width:80px;height:23px;box-sizing:border-box;border:1px solid #6e6e6e;background:#2b2b2b"></div>
<span id="t61" style="position:absolute;left:496px;top:575px;height:20px;line-height:20px;white-space:nowrap;color:#ffffff;font-size:12px;">6</span>
<span id="t62" style="position:absolute;left:570.6px;top:575px;height:20px;line-height:20px;white-space:nowrap;color:#ffffff;font-size:12px;letter-spacing:0.667px;">mm</span>
<svg style="position:absolute;left:0;top:0;overflow:visible" width="1" height="1"><polygon points="224.20,603.85 228.97,606.42 228.97,611.58 224.20,614.15 219.43,611.58 219.43,606.42" fill="#e70000"/></svg>
<span id="t63" style="position:absolute;left:232.5px;top:600px;height:20px;line-height:20px;white-space:nowrap;color:#73dc67;font-size:12px;letter-spacing:-0.179px;">Pattern angle:</span>
<svg style="position:absolute;left:454px;top:602px;overflow:visible" width="12" height="14" viewBox="0 0 12 14"><path d="M2.1 7 V2.9 A1.8 1.8 0 0 1 3.9 1.1 H8.1 A1.8 1.8 0 0 1 9.9 2.9 V7" fill="none" stroke="#fff" stroke-width="2"/><rect x="0" y="6.5" width="12" height="7.5" rx="1.2" fill="#fff"/><path d="M3.9 10.6 L5.3 9.2 L6.6 10.1 H8.3 V11.1 H6.6 L5.3 12 Z" fill="#2b2b2b"/></svg>
<div style="position:absolute;left:475px;top:606px;width:6px;height:6px;border-radius:50%;background:#fff"></div>
<div style="position:absolute;left:488px;top:598px;width:80px;height:23px;box-sizing:border-box;border:1px solid #6e6e6e;background:#2b2b2b"></div>
<span id="t64" style="position:absolute;left:496px;top:600px;height:20px;line-height:20px;white-space:nowrap;color:#ffffff;font-size:12px;">0</span>
<span id="t65" style="position:absolute;left:570.6px;top:600px;height:20px;line-height:20px;white-space:nowrap;color:#ffffff;font-size:12px;letter-spacing:-0.812px;">°</span>
<svg style="position:absolute;left:0;top:0;overflow:visible" width="1" height="1"><polygon points="224.20,628.85 228.97,631.42 228.97,636.58 224.20,639.15 219.43,636.58 219.43,631.42" fill="#ffdc00"/></svg>
<span id="t66" style="position:absolute;left:232.5px;top:625px;height:20px;line-height:20px;white-space:nowrap;color:#73dc67;font-size:12px;letter-spacing:-0.157px;">Closing radius:</span>
<svg style="position:absolute;left:454px;top:627px;overflow:visible" width="12" height="14" viewBox="0 0 12 14"><path d="M2.1 7 V2.9 A1.8 1.8 0 0 1 3.9 1.1 H8.1 A1.8 1.8 0 0 1 9.9 2.9 V7" fill="none" stroke="#fff" stroke-width="2"/><rect x="0" y="6.5" width="12" height="7.5" rx="1.2" fill="#fff"/><path d="M3.9 10.6 L5.3 9.2 L6.6 10.1 H8.3 V11.1 H6.6 L5.3 12 Z" fill="#2b2b2b"/></svg>
<div style="position:absolute;left:475px;top:631px;width:6px;height:6px;border-radius:50%;background:#fff"></div>
<div style="position:absolute;left:488px;top:623px;width:80px;height:23px;box-sizing:border-box;border:1px solid #6e6e6e;background:#404040"></div>
<span id="t67" style="position:absolute;left:496px;top:625px;height:20px;line-height:20px;white-space:nowrap;color:#777777;font-size:12px;">2</span>
<span id="t68" style="position:absolute;left:570.6px;top:625px;height:20px;line-height:20px;white-space:nowrap;color:#ffffff;font-size:12px;letter-spacing:0.667px;">mm</span>
<svg style="position:absolute;left:0;top:0;overflow:visible" width="1" height="1"><polygon points="224.20,653.85 228.97,656.42 228.97,661.58 224.20,664.15 219.43,661.58 219.43,656.42" fill="#ffdc00"/></svg>
<span id="t69" style="position:absolute;left:232.5px;top:650px;height:20px;line-height:20px;white-space:nowrap;color:#73dc67;font-size:12px;letter-spacing:-0.161px;">Top interface layers:</span>
<svg style="position:absolute;left:454px;top:652px;overflow:visible" width="12" height="14" viewBox="0 0 12 14"><path d="M2.1 7 V2.9 A1.8 1.8 0 0 1 3.9 1.1 H8.1 A1.8 1.8 0 0 1 9.9 2.9 V7" fill="none" stroke="#fff" stroke-width="2"/><rect x="0" y="6.5" width="12" height="7.5" rx="1.2" fill="#fff"/><path d="M3.9 10.6 L5.3 9.2 L6.6 10.1 H8.3 V11.1 H6.6 L5.3 12 Z" fill="#2b2b2b"/></svg>
<div style="position:absolute;left:475px;top:656px;width:6px;height:6px;border-radius:50%;background:#fff"></div>
<div style="position:absolute;left:488px;top:647px;width:160px;height:24px;box-sizing:border-box;border:1px solid #6e6e6e;background:#2b2b2b"></div>
<span id="t70" style="position:absolute;left:496px;top:649px;height:20px;line-height:20px;white-space:nowrap;color:#ffffff;font-size:12px;">2 (default)</span>
<svg style="position:absolute;left:0;top:0;overflow:visible" width="1" height="1"><path d="M632.1 656.65 L637.6 661.45 L643.1 656.65" fill="none" stroke="#747474" stroke-width="1.2"/></svg>
<span id="t71" style="position:absolute;left:650.6px;top:650px;height:20px;line-height:20px;white-space:nowrap;color:#ffffff;font-size:12px;letter-spacing:-0.585px;">layers</span>
<svg style="position:absolute;left:0;top:0;overflow:visible" width="1" height="1"><polygon points="224.20,678.85 228.97,681.42 228.97,686.58 224.20,689.15 219.43,686.58 219.43,681.42" fill="#ffdc00"/></svg>
<span id="t72" style="position:absolute;left:232.5px;top:675px;height:20px;line-height:20px;white-space:nowrap;color:#73dc67;font-size:12px;letter-spacing:-0.084px;">Bottom interface layers:</span>
<svg style="position:absolute;left:454px;top:677px;overflow:visible" width="12" height="14" viewBox="0 0 12 14"><path d="M2.1 7 V2.9 A1.8 1.8 0 0 1 3.9 1.1 H8.1 A1.8 1.8 0 0 1 9.9 2.9 V7" fill="none" stroke="#fff" stroke-width="2"/><rect x="0" y="6.5" width="12" height="7.5" rx="1.2" fill="#fff"/><path d="M3.9 10.6 L5.3 9.2 L6.6 10.1 H8.3 V11.1 H6.6 L5.3 12 Z" fill="#2b2b2b"/></svg>
<div style="position:absolute;left:475px;top:681px;width:6px;height:6px;border-radius:50%;background:#fff"></div>
<div style="position:absolute;left:488px;top:672px;width:160px;height:24px;box-sizing:border-box;border:1px solid #6e6e6e;background:#2b2b2b"></div>
<span id="t73" style="position:absolute;left:496px;top:674px;height:20px;line-height:20px;white-space:nowrap;color:#ffffff;font-size:12px;">Same as top</span>
<svg style="position:absolute;left:0;top:0;overflow:visible" width="1" height="1"><path d="M632.1 681.65 L637.6 686.45 L643.1 681.65" fill="none" stroke="#747474" stroke-width="1.2"/></svg>
<span id="t74" style="position:absolute;left:650.6px;top:675px;height:20px;line-height:20px;white-space:nowrap;color:#ffffff;font-size:12px;letter-spacing:-0.585px;">layers</span>
<svg style="position:absolute;left:0;top:0;overflow:visible" width="1" height="1"><polygon points="224.20,703.85 228.97,706.42 228.97,711.58 224.20,714.15 219.43,711.58 219.43,706.42" fill="#ffdc00"/></svg>
<span id="t75" style="position:absolute;left:232.5px;top:700px;height:20px;line-height:20px;white-space:nowrap;color:#73dc67;font-size:12px;letter-spacing:-0.082px;">Interface pattern:</span>
<svg style="position:absolute;left:454px;top:702px;overflow:visible" width="12" height="14" viewBox="0 0 12 14"><path d="M2.1 7 V2.9 A1.8 1.8 0 0 1 3.9 1.1 H8.1 A1.8 1.8 0 0 1 9.9 2.9 V7" fill="none" stroke="#fff" stroke-width="2"/><rect x="0" y="6.5" width="12" height="7.5" rx="1.2" fill="#fff"/><path d="M3.9 10.6 L5.3 9.2 L6.6 10.1 H8.3 V11.1 H6.6 L5.3 12 Z" fill="#2b2b2b"/></svg>
<div style="position:absolute;left:475px;top:706px;width:6px;height:6px;border-radius:50%;background:#fff"></div>
<div style="position:absolute;left:488px;top:697px;width:160px;height:24px;box-sizing:border-box;border:1px solid #6e6e6e;background:#2b2b2b"></div>
<span id="t76" style="position:absolute;left:493px;top:699px;height:20px;line-height:20px;white-space:nowrap;color:#ffffff;font-size:12px;">Rectilinear</span>
<svg style="position:absolute;left:0;top:0;overflow:visible" width="1" height="1"><path d="M632.1 706.65 L637.6 711.45 L643.1 706.65" fill="none" stroke="#747474" stroke-width="1.2"/></svg>
<svg style="position:absolute;left:0;top:0;overflow:visible" width="1" height="1"><polygon points="224.20,728.85 228.97,731.42 228.97,736.58 224.20,739.15 219.43,736.58 219.43,731.42" fill="#ffdc00"/></svg>
<span id="t77" style="position:absolute;left:232.5px;top:725px;height:20px;line-height:20px;white-space:nowrap;color:#73dc67;font-size:12px;letter-spacing:-0.107px;">Interface pattern spacing:</span>
<svg style="position:absolute;left:454px;top:727px;overflow:visible" width="12" height="14" viewBox="0 0 12 14"><path d="M2.1 7 V2.9 A1.8 1.8 0 0 1 3.9 1.1 H8.1 A1.8 1.8 0 0 1 9.9 2.9 V7" fill="none" stroke="#fff" stroke-width="2"/><rect x="0" y="6.5" width="12" height="7.5" rx="1.2" fill="#fff"/><path d="M3.9 10.6 L5.3 9.2 L6.6 10.1 H8.3 V11.1 H6.6 L5.3 12 Z" fill="#2b2b2b"/></svg>
<div style="position:absolute;left:475px;top:731px;width:6px;height:6px;border-radius:50%;background:#fff"></div>
<div style="position:absolute;left:488px;top:723px;width:80px;height:23px;box-sizing:border-box;border:1px solid #6e6e6e;background:#2b2b2b"></div>
<span id="t78" style="position:absolute;left:496px;top:725px;height:20px;line-height:20px;white-space:nowrap;color:#ffffff;font-size:12px;">1.5</span>
<span id="t79" style="position:absolute;left:570.6px;top:725px;height:20px;line-height:20px;white-space:nowrap;color:#ffffff;font-size:12px;letter-spacing:0.667px;">mm</span>
<div style="position:absolute;left:61px;top:49px;width:108px;height:33px;box-sizing:border-box;border:3px solid #f04b3c;border-radius:3.5px"></div>
<div style="position:absolute;left:2px;top:159px;width:119px;height:27.5px;box-sizing:border-box;border:3px solid #f04b3c;border-radius:3.5px"></div>
<div style="position:absolute;left:477.1px;top:433.4px;width:181.5px;height:43.9px;box-sizing:border-box;border:3px solid #f04b3c;border-radius:3.5px"></div>
</body></html>
